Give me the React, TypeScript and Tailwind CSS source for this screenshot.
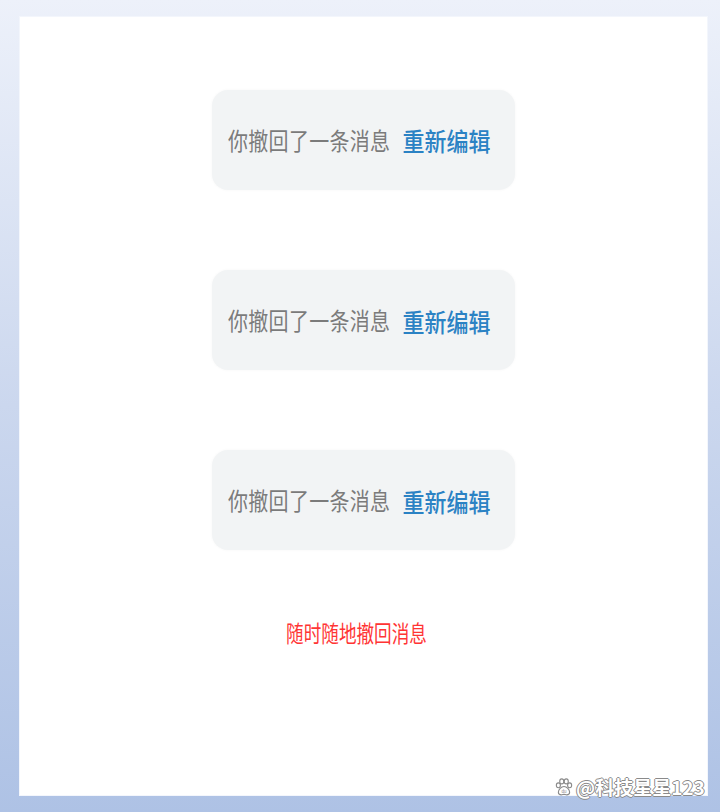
import React from "react";

function PawIcon() {
  return (
    <svg width="18" height="18" viewBox="0 0 16 16" className="shrink-0">
      <g fill="#fff" stroke="#8a8a8a" strokeWidth="1">
        <ellipse cx="3" cy="6.5" rx="1.8" ry="2.2" />
        <ellipse cx="6" cy="3" rx="1.8" ry="2.2" />
        <ellipse cx="10" cy="3" rx="1.8" ry="2.2" />
        <ellipse cx="13" cy="6.5" rx="1.8" ry="2.2" />
        <path d="M8 7.5c-2.5 0-5 3-5 5.2 0 1.6 1.4 2.3 2.6 2.3 1 0 1.6-.5 2.4-.5s1.4.5 2.4.5c1.2 0 2.6-.7 2.6-2.3 0-2.2-2.5-5.2-5-5.2z" />
      </g>
      <text x="8" y="13.3" fontSize="4" textAnchor="middle" fill="#8a8a8a" fontFamily="Liberation Sans, sans-serif">du</text>
    </svg>
  );
}

function RecallBubble() {
  return (
    <div className="w-[303px] h-[100px] rounded-[16px] bg-[#f2f4f5] flex items-center pl-[16px] shadow-[0_0_3px_rgba(0,0,0,0.04)]">
      <span className="inline-block scale-y-[1.2] text-[20px] leading-none text-[#7b7b7b] tracking-[0.3px]">你撤回了一条消息</span>
      <span className="inline-block scale-y-[1.15] ml-[12px] text-[22px] leading-none text-[#2b82c4] font-medium">重新编辑</span>
    </div>
  );
}

export default function App() {
  return (
    <div
      className="relative w-[720px] h-[812px] bg-gradient-to-b from-[#edf1fa] via-[#cbd7ee] to-[#aec2e5] pt-[16px] pl-[19px]"
      style={{ fontFamily: '"Noto Sans CJK SC", "Noto Sans", sans-serif' }}
    >
      <div className="w-[689px] h-[780px] bg-white border border-[#f3f6fc] flex flex-col items-center pt-[73px]">
        <div className="flex flex-col items-center gap-[80px]">
          <RecallBubble />
          <RecallBubble />
          <RecallBubble />
        </div>
        <div className="mt-[74px] mr-[14px] inline-block scale-y-[1.3] text-[17.6px] leading-none text-[#ff3434]">
          随时随地撤回消息
        </div>
      </div>

      <div className="absolute left-[555px] top-[777px] flex items-center gap-[3px]">
        <PawIcon />
        <span className="text-[19px] leading-none font-semibold text-white [text-shadow:1px_0_0_#8a8a8a,-1px_0_0_#8a8a8a,0_1px_0_#8a8a8a,0_-1px_0_#8a8a8a]">
          @科技星星123
        </span>
      </div>
    </div>
  );
}
